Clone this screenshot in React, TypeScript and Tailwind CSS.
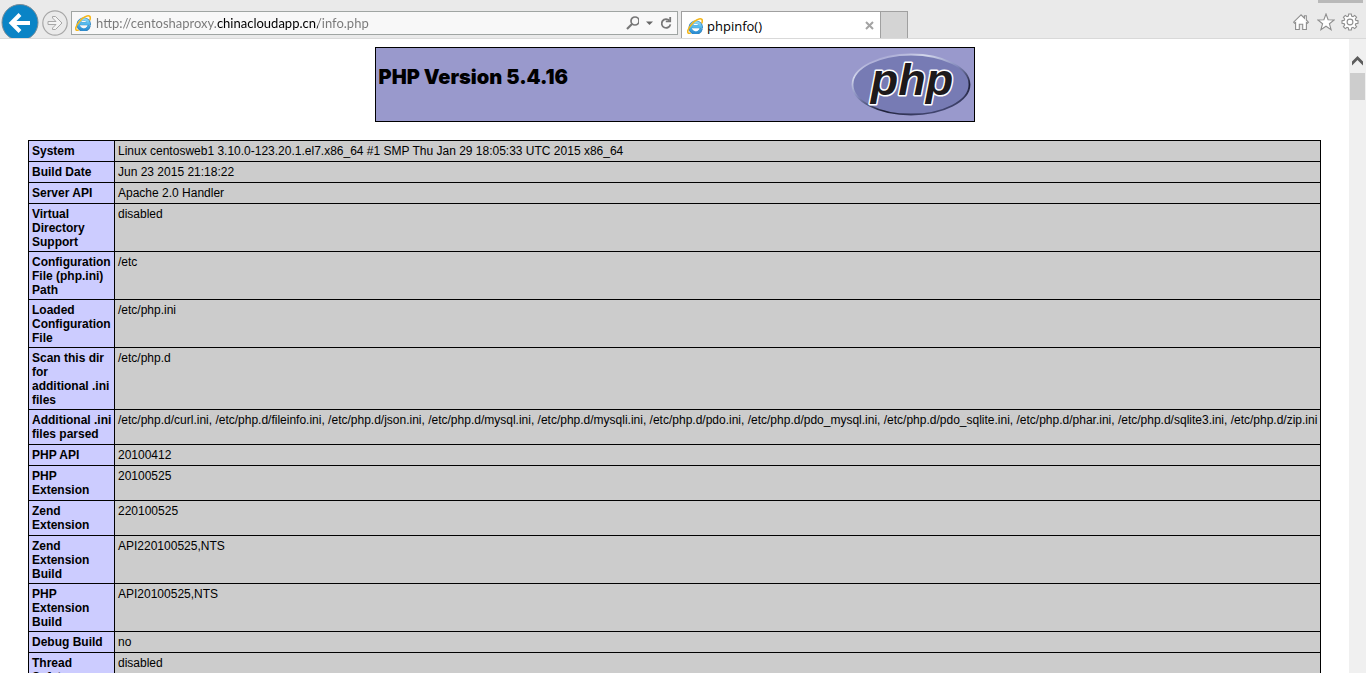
import React from "react";

type Row = { name: string; value: string };

// "\u00a0" keeps the ".ini" suffix on the line of the word before it.
const rows: Row[] = [
  { name: "System", value: "Linux centosweb1 3.10.0-123.20.1.el7.x86_64 #1 SMP Thu Jan 29 18:05:33 UTC 2015 x86_64" },
  { name: "Build Date", value: "Jun 23 2015 21:18:22" },
  { name: "Server API", value: "Apache 2.0 Handler" },
  { name: "Virtual Directory Support", value: "disabled" },
  { name: "Configuration File (php.ini) Path", value: "/etc" },
  { name: "Loaded Configuration File", value: "/etc/php.ini" },
  { name: "Scan this dir for additional\u00a0.ini files", value: "/etc/php.d" },
  {
    name: "Additional\u00a0.ini files parsed",
    value:
      "/etc/php.d/curl.ini, /etc/php.d/fileinfo.ini, /etc/php.d/json.ini, /etc/php.d/mysql.ini, /etc/php.d/mysqli.ini, /etc/php.d/pdo.ini, /etc/php.d/pdo_mysql.ini, /etc/php.d/pdo_sqlite.ini, /etc/php.d/phar.ini, /etc/php.d/sqlite3.ini, /etc/php.d/zip.ini",
  },
  { name: "PHP API", value: "20100412" },
  { name: "PHP Extension", value: "20100525" },
  { name: "Zend Extension", value: "220100525" },
  { name: "Zend Extension Build", value: "API220100525,NTS" },
  { name: "PHP Extension Build", value: "API20100525,NTS" },
  { name: "Debug Build", value: "no" },
  { name: "Thread Safety", value: "disabled" },
];

// Names that wrap to three or more lines sit in slightly tighter rows.
const tightRows = new Set([
  "Virtual Directory Support",
  "Configuration File (php.ini) Path",
  "Loaded Configuration File",
  "Scan this dir for additional\u00a0.ini files",
  "Zend Extension Build",
  "PHP Extension Build",
]);

function BrowserIcon({ id }: { id: string }) {
  return (
    <svg viewBox="0 0 16 16" className="size-4 shrink-0" aria-hidden="true">
      <defs>
        <linearGradient id={id} x1="0" y1="0" x2="0" y2="1">
          <stop offset="0" stopColor="#8bd8f8" />
          <stop offset="0.5" stopColor="#4db4ea" />
          <stop offset="1" stopColor="#2c8ed2" />
        </linearGradient>
      </defs>
      <path
        d="M14.3 10.6A5.6 5.6 0 1 1 14.3 8.7H5.2"
        fill="none"
        stroke="#3483bd"
        strokeWidth="3.2"
      />
      <path
        d="M13.8 10.8A5.2 5.2 0 1 1 13.9 8.6H5.4"
        fill="none"
        stroke={`url(#${id})`}
        strokeWidth="2.6"
      />
      <path
        d="M3.6 15.1C1.6 15.9 0.3 15 0.9 12.5C1.8 8.8 6.3 3.6 10.6 1.6C13.4 0.2 15.6 0.6 15.3 3.4C15.2 4.2 15 4.8 14.7 5.4"
        fill="none"
        stroke="#f4b71c"
        strokeWidth="1.6"
      />
    </svg>
  );
}

function PhpLogo() {
  return (
    <svg viewBox="0 0 120 67" className="h-[67px] w-[120px]" role="img" aria-label="PHP logo">
      <defs>
        <linearGradient id="rim" x1="0.2" y1="0" x2="0.8" y2="1">
          <stop offset="0" stopColor="#9999cc" />
          <stop offset="0.2" stopColor="#d4d8ec" />
          <stop offset="0.45" stopColor="#8289bb" />
          <stop offset="0.72" stopColor="#1e2038" />
          <stop offset="1" stopColor="#4c5080" />
        </linearGradient>
      </defs>
      <ellipse cx="60" cy="33.5" rx="58.5" ry="30" fill="#777bb4" stroke="url(#rim)" strokeWidth="1.8" />
      <text
        x="61"
        y="44"
        textAnchor="middle"
        fontFamily="Liberation Sans, Arial, sans-serif"
        fontWeight="700"
        fontStyle="italic"
        fontSize="45"
        fill="#1d191b"
        stroke="#ffffff"
        strokeWidth="3"
        strokeLinejoin="round"
        paintOrder="stroke"
      >
        php
      </text>
    </svg>
  );
}

function Toolbar() {
  return (
    <header className="flex h-[39px] shrink-0 items-stretch overflow-hidden border-b border-[#d9d9d9] bg-[#eaeaea] font-['Open_Sans','Noto_Sans',sans-serif]">
      <button type="button" aria-label="Back" className="ml-px mt-1 size-[38px] shrink-0">
        <svg viewBox="0 0 38 38" className="size-[38px]">
          <circle cx="19" cy="18.5" r="18" fill="#0a84c6" stroke="#7b8d98" strokeWidth="1" />
          <path d="M29 19H11M19 10.5L10.5 19L19 27.5" fill="none" stroke="#fff" strokeWidth="4" />
        </svg>
      </button>
      <button type="button" aria-label="Forward" className="ml-[3px] mt-[10px] size-[26px] shrink-0">
        <svg viewBox="0 0 26 26" className="size-[26px]" fill="none" stroke="#a7a7a7">
          <circle cx="13" cy="13" r="12.2" strokeWidth="1.2" />
          <path d="M6 11.5H14L10.5 8V6.5H13.5L20 13L13.5 19.5H10.5V18L14 14.5H6Z" fill="#f3f3f3" />
        </svg>
      </button>
      <div className="ml-[3px] mt-[11px] flex h-6 w-[607px] min-w-0 items-center border border-[#a0a5a3] bg-[#f8f8f8] pl-[3px] pr-[3px]">
        <BrowserIcon id="addressIcon" />
        <input
          aria-label="Address"
          defaultValue="http://centoshaproxy.chinacloudapp.cn/info.php"
          className="ml-[5px] h-5 min-w-0 flex-1 bg-[linear-gradient(90deg,#777_121px,#000_121px,#000_222px,#777_222px)] bg-clip-text font-['Lato',sans-serif] text-[13px] leading-5 text-transparent outline-none"
        />
        <button type="button" aria-label="Search" className="size-4 shrink-0">
          <svg viewBox="0 0 16 16" className="size-4" fill="none" stroke="#777">
            <circle cx="12" cy="6" r="4" strokeWidth="1.7" />
            <path d="M9 9L4 14" strokeWidth="2.2" />
          </svg>
        </button>
        <button type="button" aria-label="Show address list" className="ml-1 size-3 shrink-0">
          <svg viewBox="0 0 12 12" className="size-3">
            <path d="M3 4.5H10L6.5 8Z" fill="#666" />
          </svg>
        </button>
        <button type="button" aria-label="Refresh" className="ml-[3px] size-4 shrink-0">
          <svg viewBox="0 0 16 16" className="size-4" fill="none" stroke="#777" strokeWidth="1.8">
            <path d="M11.4 5.6A4.4 4.4 0 1 0 12.4 9.4" />
            <path d="M12.2 2V6.4H7.8" />
          </svg>
        </button>
      </div>
      <div className="ml-[3px] mt-[11px] flex h-7 w-[200px] shrink-0 items-center border border-b-0 border-[#a0a0a0] bg-white pl-[5px] pr-[6px]">
        <BrowserIcon id="tabIcon" />
        <a href="#" className="ml-1 flex-1 text-[13px] leading-5 text-black">
          phpinfo()
        </a>
        <button type="button" aria-label="Close tab" className="size-[9px]">
          <svg viewBox="0 0 9 9" className="size-[9px]">
            <path d="M1 1L8 8M8 1L1 8" stroke="#a3a3a3" strokeWidth="2" />
          </svg>
        </button>
      </div>
      <button
        type="button"
        aria-label="New tab"
        className="mt-[11px] w-[27px] shrink-0 border border-b-0 border-l-0 border-[#a0a0a0] bg-[#d4d4d4]"
      />
      <div className="ml-auto flex flex-col items-end">
        <div className="mr-[3px] h-[3px] w-[45px] bg-[#b9b9b9]" />
        <div className="mr-[7px] mt-[10px] flex gap-[6px]">
          <button type="button" aria-label="Home" className="size-[18px]">
            <svg viewBox="0 0 18 18" className="size-[18px]" fill="#fff" stroke="#8e8e8e" strokeWidth="1.1">
              <path d="M8 1.8L0.6 9.2L1.6 10.3L2.6 9.6V16.5H6.3V11.3H9.7V16.5H13.4V9.6L14.4 10.3L15.4 9.2L13.3 7V2.8H11.4V5.2Z" />
            </svg>
          </button>
          <button type="button" aria-label="Favorites" className="size-[18px]">
            <svg viewBox="0 0 18 18" className="size-[18px]" fill="#fff" stroke="#8e8e8e" strokeWidth="1.1">
              <path d="M9 1L11.1 6.7L17.2 6.9L12.4 10.7L14.1 16.6L9 13.2L3.9 16.6L5.6 10.7L0.8 6.9L6.9 6.7Z" />
            </svg>
          </button>
          <button type="button" aria-label="Tools" className="size-[18px]">
            <svg viewBox="0 0 18 18" className="size-[18px]" fill="#fff" stroke="#8e8e8e" strokeWidth="1.1">
              <path d="M7.7 1H10.3L10.6 3.1L12 3.7L13.7 2.4L15.6 4.3L14.3 6L14.9 7.4L17 7.7V10.3L14.9 10.6L14.3 12L15.6 13.7L13.7 15.6L12 14.3L10.6 14.9L10.3 17H7.7L7.4 14.9L6 14.3L4.3 15.6L2.4 13.7L3.7 12L3.1 10.6L1 10.3V7.7L3.1 7.4L3.7 6L2.4 4.3L4.3 2.4L6 3.7L7.4 3.1Z" />
              <circle cx="9" cy="9" r="2.9" />
            </svg>
          </button>
        </div>
      </div>
    </header>
  );
}

export default function App() {
  return (
    <div className="flex h-screen flex-col overflow-hidden bg-white text-black">
      <Toolbar />
      <div className="flex min-h-0 flex-1">
        <main className="min-w-0 flex-1 overflow-hidden px-7 pt-2 font-['Liberation_Sans',Arial,sans-serif]">
          <div className="mx-auto flex h-[75px] max-w-[600px] items-start justify-between border border-black bg-[#9999cc] pl-[3px] pr-[3px] pt-[3px]">
            <h1 className="mt-[14px] font-['Inter',sans-serif] text-[20px] font-black leading-6">
              PHP Version 5.4.16
            </h1>
            <a href="http://www.php.net/">
              <PhpLogo />
            </a>
          </div>
          <table className="mt-[18px] w-full table-fixed border-collapse text-[12px] leading-[14px]">
            <colgroup>
              <col className="w-[86px]" />
              <col />
            </colgroup>
            <tbody>
              {rows.map((row) => (
                <tr key={row.name} className="align-top">
                  <th
                    scope="row"
                    className={
                      tightRows.has(row.name)
                        ? "border border-black bg-[#ccccff] px-[3px] pb-[2px] pt-[3px] text-left font-bold"
                        : "border border-black bg-[#ccccff] p-[3px] text-left font-bold"
                    }
                  >
                    {row.name}
                  </th>
                  <td className="whitespace-nowrap border border-black bg-[#cccccc] px-[3px] pt-[3px]">{row.value}</td>
                </tr>
              ))}
            </tbody>
          </table>
        </main>
        <div className="flex w-[17px] shrink-0 flex-col items-center bg-[#f0f0f0] pt-[17px]">
          <button type="button" aria-label="Scroll up" className="h-[10px] w-[11px]">
            <svg viewBox="0 0 11 10" className="h-[10px] w-[11px]">
              <path d="M5.5 0L11 5.5V9.5L5.5 4L0 9.5V5.5Z" fill="#5c5c5c" />
            </svg>
          </button>
          <div className="mt-[7px] h-[27px] w-[15px] bg-[#cdcdcd]" />
        </div>
      </div>
    </div>
  );
}
